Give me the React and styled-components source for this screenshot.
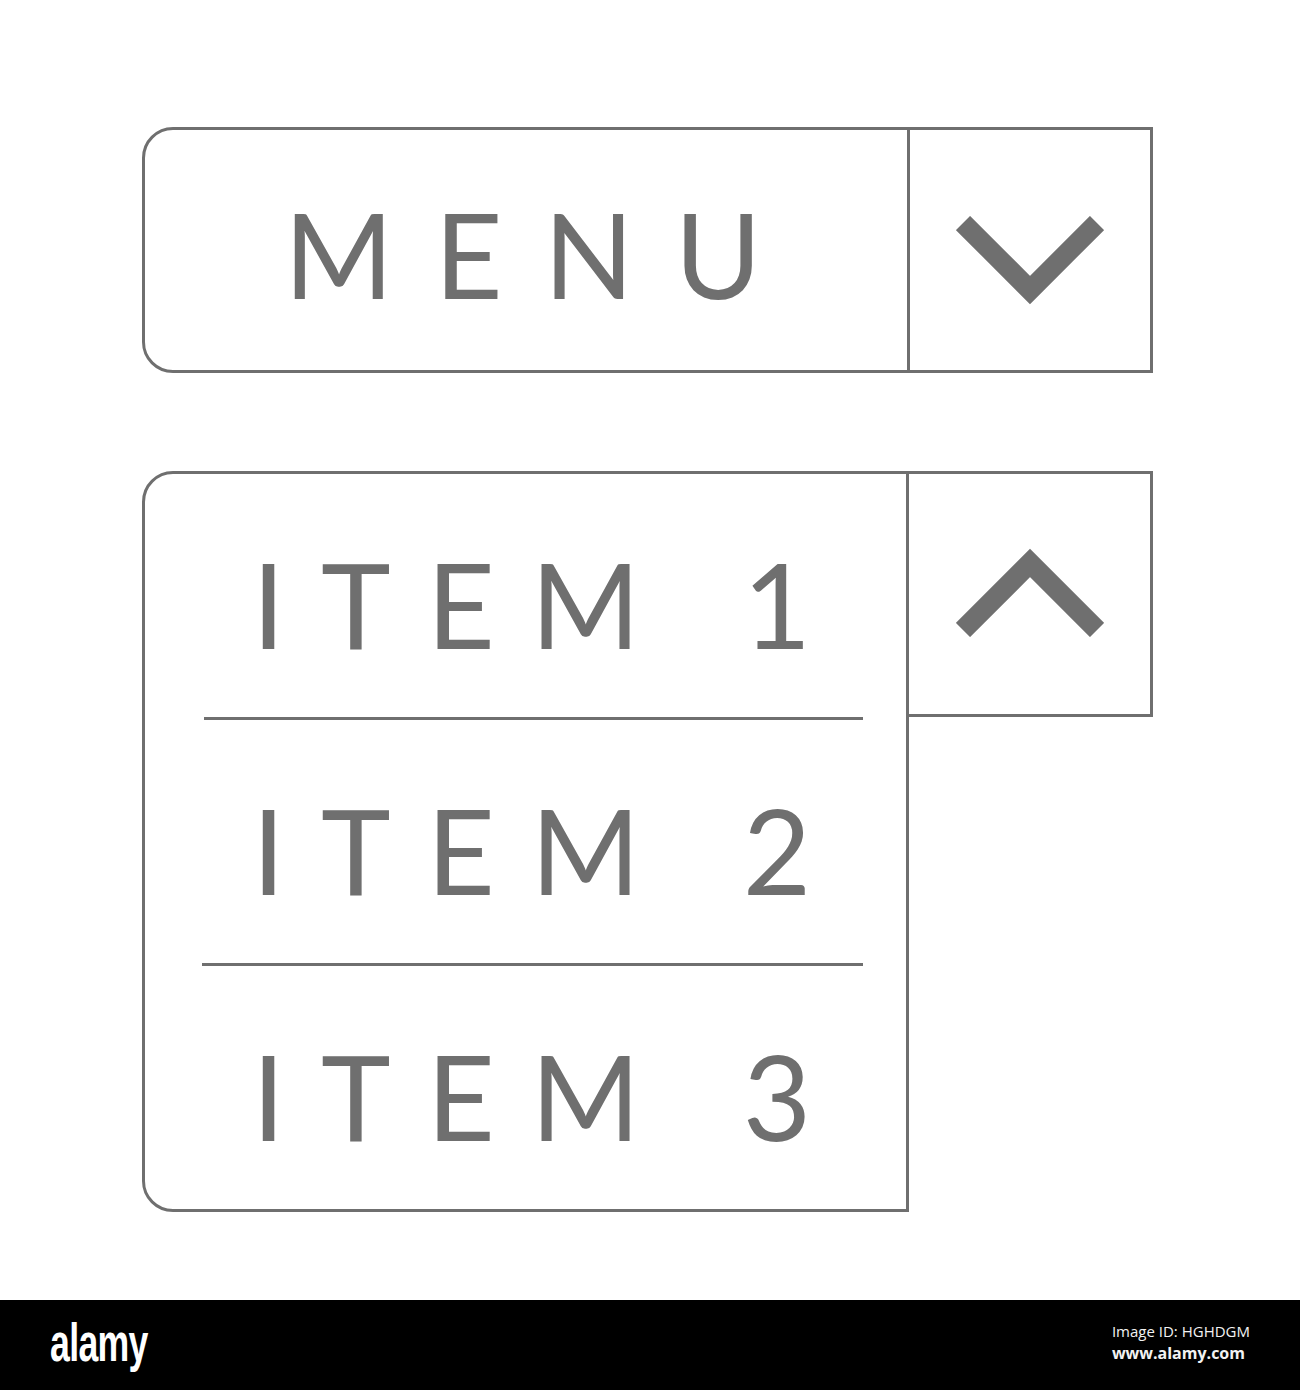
import styled, { createGlobalStyle } from "styled-components";

const GlobalStyle = createGlobalStyle`
  html, body {
    margin: 0;
    padding: 0;
    background: #ffffff;
  }
`;

const LINE = "#6f6f6f";

const Page = styled.div`
  width: 1300px;
  height: 1390px;
  display: flex;
  flex-direction: column;
  font-family: "Lato", "Open Sans", sans-serif;
`;

const Stage = styled.main`
  height: 1300px;
  box-sizing: border-box;
  padding: 127px 0 0 142px;
  display: flex;
  flex-direction: column;
  gap: 98px;
`;

const MenuBar = styled.div`
  width: 1011px;
  height: 246px;
  box-sizing: border-box;
  border: 3px solid ${LINE};
  border-radius: 31px 0 0 31px;
  display: flex;
`;

const Caption = styled.span`
  font-size: 118px;
  font-weight: 400;
  color: ${LINE};
  letter-spacing: ${(p) => p.$spacing}px;
  line-height: 1;
  white-space: nowrap;
`;

const MenuLabel = styled.div`
  flex: 1;
  display: flex;
  align-items: center;
  padding: 7px 0 0 139px;
`;

const Toggle = styled.div`
  width: ${(p) => (p.$boxed ? 244 : 243)}px;
  height: ${(p) => (p.$boxed ? "246px" : "auto")};
  box-sizing: border-box;
  display: flex;
  justify-content: center;
  align-items: flex-start;
  padding-top: ${(p) => p.$top}px;
  border-left: ${(p) => (p.$boxed ? "none" : `3px solid ${LINE}`)};
  ${(p) =>
    p.$boxed &&
    `
    border-top: 3px solid ${LINE};
    border-right: 3px solid ${LINE};
    border-bottom: 3px solid ${LINE};
  `}
`;

const Chevron = ({ up }) => (
  <svg width="148" height="89" viewBox="0 0 148 89">
    <polyline
      points={up ? "7,82 74,15 141,82" : "7,7 74,74 141,7"}
      fill="none"
      stroke={LINE}
      strokeWidth="20"
      strokeLinecap="butt"
      strokeLinejoin="miter"
    />
  </svg>
);

const DropRow = styled.div`
  display: flex;
  align-items: flex-start;
`;

const List = styled.ul`
  margin: 0;
  padding: 0;
  list-style: none;
  width: 767px;
  height: 741px;
  box-sizing: border-box;
  border: 3px solid ${LINE};
  border-radius: 31px 0 0 31px;
  display: flex;
  flex-direction: column;
`;

const Item = styled.li`
  flex: 1;
  display: flex;
  align-items: center;
  padding: 16px 0 0 107px;
`;

const Rule = styled.li`
  height: 3px;
  background: ${LINE};
  margin: 0 43px 0 ${(p) => p.$left}px;
`;

const Footer = styled.footer`
  height: 90px;
  background: #000000;
  display: flex;
  align-items: center;
  justify-content: space-between;
  padding: 0 50px;
`;

const Logo = styled.span`
  display: inline-block;
  font-family: "Liberation Sans", Arial, sans-serif;
  font-weight: 700;
  font-size: 54px;
  letter-spacing: -1px;
  color: #ffffff;
  line-height: 1;
  margin-top: -6px;
  transform: scaleX(0.66);
  transform-origin: left center;
`;

const Credits = styled.div`
  display: flex;
  flex-direction: column;
  gap: 4px;
  font-family: "Open Sans", "Noto Sans", sans-serif;
  color: #f2f2f2;
  margin-top: -4px;
`;

const CreditLine = styled.span`
  font-size: ${(p) => (p.$bold ? 16 : 15)}px;
  font-weight: ${(p) => (p.$bold ? 700 : 400)};
  line-height: 1.2;
`;

const items = ["ITEM 1", "ITEM 2", "ITEM 3"];

export default function App() {
  return (
    <>
      <GlobalStyle />
      <Page>
        <Stage>
          <MenuBar>
            <MenuLabel>
              <Caption $spacing={41}>MENU</Caption>
            </MenuLabel>
            <Toggle $top={86}>
              <Chevron />
            </Toggle>
          </MenuBar>

          <DropRow>
            <List>
              {items.flatMap((label, i) => [
                i > 0 && <Rule key={`rule-${i}`} $left={i === 1 ? 59 : 57} />,
                <Item key={label}>
                  <Caption $spacing={36}>{label}</Caption>
                </Item>,
              ])}
            </List>
            <Toggle $boxed $top={74}>
              <Chevron up />
            </Toggle>
          </DropRow>
        </Stage>

        <Footer>
          <Logo>alamy</Logo>
          <Credits>
            <CreditLine>Image ID: HGHDGM</CreditLine>
            <CreditLine $bold>www.alamy.com</CreditLine>
          </Credits>
        </Footer>
      </Page>
    </>
  );
}
